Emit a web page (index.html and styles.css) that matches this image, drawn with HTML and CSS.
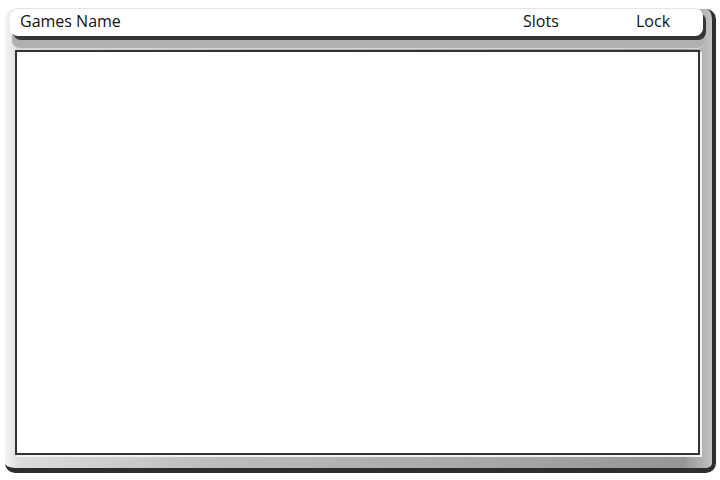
FILE: index.html
```html
<!DOCTYPE html>
<html lang="en">
<head>
    <meta charset="UTF-8">
    <title>Games List</title>
    <link rel="stylesheet" href="styles.css">
</head>
<body>
    <div class="frame">
        <div class="header">
            <span class="col_name">Games Name</span>
            <span class="col_slots">Slots</span>
            <span class="col_lock">Lock</span>
        </div>
        <div class="list_panel">
            <ul id="games_list"></ul>
        </div>
    </div>
</body>
</html>
```

FILE: styles.css
```css
body{
    margin: 0;
    background: #ffffff;
    font-family: 'Open Sans', 'Liberation Sans', sans-serif;
}

.frame{
    margin-left: 5px;
    margin-top: 9px;
    width: 707px;
    height: 459px;
    border-right: 4px solid #2d2d2d;
    border-bottom: 5px solid #2d2d2d;
    border-radius: 10px;
    background: linear-gradient(to right, #f4f4f4 0%, #dcdcdc 2%, #bcbcbc 30%, #a6a6a6 70%, #969696 96%, #b6b6b6 99%, #c4c4c4 100%);
}

/* header bar with its dark drop edge and the gray strip under it */
.header{
    margin-left: 5px;
    width: 693px;
    height: 27px;
    background: #ffffff;
    border-radius: 8px;
    box-shadow: 0 -1px 0 #e4e4e4, 3px 4px 0 #363636, 2px 12px 0 #b0b0b0, 2px 13px 0 #d6d6d6;
    display: grid;
    grid-template-columns: 503px 113px auto;
    padding-left: 10px;
    box-sizing: border-box;
    font-size: 16px;
    line-height: 25px;
    color: #111111;
}

.list_panel{
    position: relative;
    margin-top: 14px;
    margin-left: 10px;
    width: 681px;
    height: 401px;
    background: #ffffff;
    border: 2px solid #333333;
    box-shadow: 2px 2px 0 #f2f2f2;
}

#games_list{
    list-style: none;
    margin: 0;
    padding: 0;
}
```
